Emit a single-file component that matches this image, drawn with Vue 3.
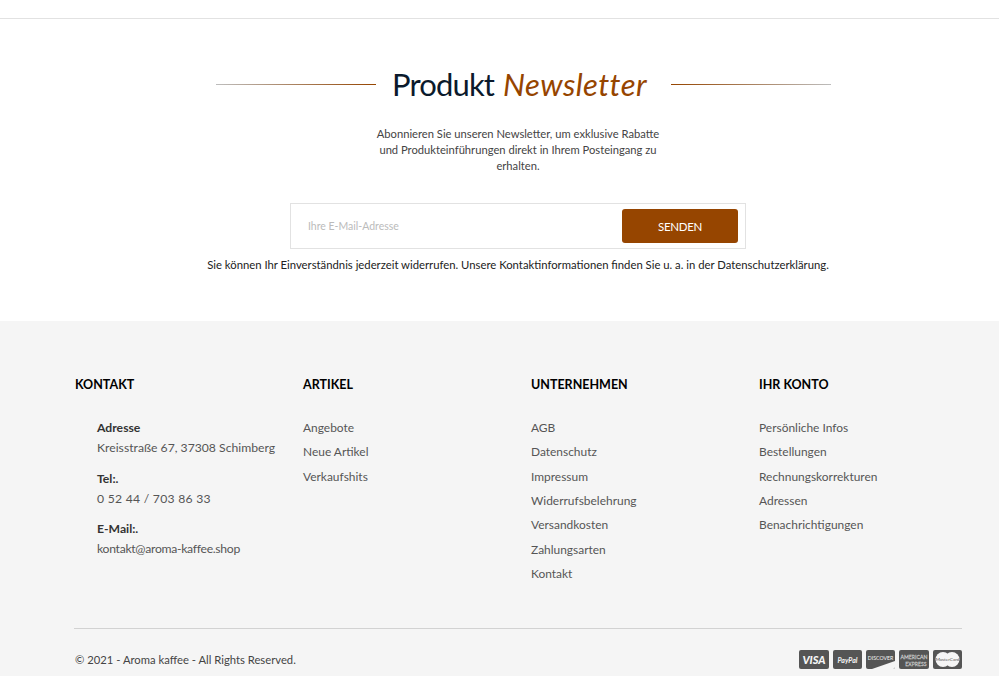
<script setup>
const columns = [
  { title: 'Artikel', links: ['Angebote', 'Neue Artikel', 'Verkaufshits'] },
  { title: 'Unternehmen', links: ['AGB', 'Datenschutz', 'Impressum', 'Widerrufsbelehrung', 'Versandkosten', 'Zahlungsarten', 'Kontakt'] },
  { title: 'Ihr Konto', links: ['Persönliche Infos', 'Bestellungen', 'Rechnungskorrekturen', 'Adressen', 'Benachrichtigungen'] },
]
const contact = [
  { label: 'Adresse', value: 'Kreisstraße 67, 37308 Schimberg', kind: 'addr' },
  { label: 'Tel:.', value: '0 52 44 / 703 86 33', kind: 'tel' },
  { label: 'E-Mail:.', value: 'kontakt@aroma-kaffee.shop', kind: 'mail' },
]
</script>

<template>
  <div class="page">
    <header class="topbar"></header>
    <section class="newsletter">
      <div class="title-row">
        <span class="rule rule-left"></span>
        <h2 class="title"><span class="t1">Produkt</span> <em>Newsletter</em></h2>
        <span class="rule rule-right"></span>
      </div>
      <p class="intro">Abonnieren Sie unseren Newsletter, um exklusive Rabatte<br>und Produkteinführungen direkt in Ihrem Posteingang zu<br>erhalten.</p>
      <form class="signup" @submit.prevent>
        <input class="email" type="text" placeholder="Ihre E-Mail-Adresse">
        <button class="send" type="submit">SENDEN</button>
      </form>
      <p class="consent">Sie können Ihr Einverständnis jederzeit widerrufen. Unsere Kontaktinformationen finden Sie u. a. in der Datenschutzerklärung.</p>
    </section>
    <footer class="footer">
      <div class="columns">
        <div class="col">
          <h3 class="col-title">Kontakt</h3>
          <div class="contact">
            <div v-for="item in contact" :key="item.label" class="contact-item" :class="item.kind">
              <strong>{{ item.label }}</strong>
              <span>{{ item.value }}</span>
            </div>
          </div>
        </div>
        <div v-for="col in columns" :key="col.title" class="col">
          <h3 class="col-title">{{ col.title }}</h3>
          <ul class="links">
            <li v-for="link in col.links" :key="link">{{ link }}</li>
          </ul>
        </div>
      </div>
      <div class="bottom">
        <span class="copy">© 2021 - Aroma kaffee - All Rights Reserved.</span>
        <div class="cards">
          <svg class="card" width="30" height="19" viewBox="0 0 30 19"><rect width="30" height="19" rx="2" fill="#555"/><text x="15" y="14" text-anchor="middle" class="c-visa">VISA</text></svg>
          <svg class="card" width="29" height="19" viewBox="0 0 29 19"><rect width="29" height="19" rx="2" fill="#555"/><text x="14.5" y="12.5" text-anchor="middle" class="c-pp">PayPal</text></svg>
          <svg class="card" width="29" height="19" viewBox="0 0 29 19"><rect width="29" height="19" rx="2" fill="#555"/><path d="M6 19 L29 11 V17 a2 2 0 0 1 -2 2 Z" fill="#f5f5f5"/><text x="14.5" y="9.5" text-anchor="middle" class="c-disc">DISCOVER</text></svg>
          <svg class="card" width="30" height="19" viewBox="0 0 30 19"><rect width="30" height="19" rx="2" fill="#555"/><text x="15" y="8.5" text-anchor="middle" class="c-am">AMERICAN</text><text x="17" y="15.5" text-anchor="middle" class="c-am">EXPRESS</text></svg>
          <svg class="card" width="29" height="19" viewBox="0 0 29 19"><rect width="29" height="19" rx="2" fill="#555"/><circle cx="10" cy="9.5" r="7.5" fill="#f5f5f5"/><circle cx="19" cy="9.5" r="7.5" fill="#f5f5f5"/><text x="14.5" y="11.2" text-anchor="middle" class="c-mc">MasterCard</text></svg>
        </div>
      </div>
    </footer>
  </div>
</template>

<style>
html, body { margin: 0; overflow: hidden; background: #fff; }
</style>

<style scoped>
.page {
  height: 676px;
  overflow: hidden;
  font-family: "Lato", "Open Sans", sans-serif;
  color: #444;
}
.topbar { height: 18px; border-bottom: 1px solid #e2e2e2; }
.newsletter {
  height: 302px;
  box-sizing: border-box;
  padding-left: 37px;
  display: flex;
  flex-direction: column;
  align-items: center;
}
.title-row {
  margin-top: 43px;
  margin-left: 11px;
  display: flex;
  align-items: center;
  width: 615px;
  height: 44px;
}
.rule { flex: none; width: 160px; height: 1px; }
.rule-left { background: linear-gradient(to right, #bdbdbd, #964500); }
.rule-right { background: linear-gradient(to right, #964500, #bdbdbd); }
.title {
  flex: 1;
  margin: 0;
  padding: 0 24px 0 16px;
  font-weight: 400;
  font-size: 31px;
  line-height: 44px;
  color: #0b1a2c;
  white-space: nowrap;
  word-spacing: 1px;
}
.t1 { letter-spacing: -0.85px; }
.title em { color: #964500; font-style: italic; letter-spacing: 0.4px; }
.intro {
  margin: 20px 0 0;
  width: 320px;
  text-align: center;
  font-size: 11.2px;
  line-height: 16px;
  color: #444;
}
.signup {
  margin-top: 29px;
  width: 456px;
  height: 46px;
  box-sizing: border-box;
  border: 1px solid #e2e2e2;
  display: flex;
  align-items: center;
  padding: 0 7px 0 17px;
}
.email {
  flex: 1;
  min-width: 0;
  border: 0;
  outline: 0;
  padding: 0;
  background: transparent;
  font: inherit;
  font-size: 10.5px;
}
.email::placeholder { color: #bbb; opacity: 1; }
.send {
  width: 116px;
  height: 34px;
  border: 0;
  border-radius: 3px;
  background: #964500;
  color: #fff;
  font: inherit;
  font-size: 11.5px;
  letter-spacing: -0.3px;
}
.consent {
  margin: 8px 0 0;
  font-size: 11.3px;
  line-height: 16px;
  color: #222;
  white-space: nowrap;
}
.footer {
  height: 355px;
  background: #f5f5f5;
  padding: 54px 37px 0 75px;
  box-sizing: border-box;
}
.columns {
  display: grid;
  grid-template-columns: repeat(4, 228px);
  height: 253px;
}
.col-title {
  margin: 0 0 21px;
  font-size: 12.5px;
  line-height: 20px;
  font-weight: 700;
  text-transform: uppercase;
  color: #000;
}
.contact { padding-left: 22px; padding-top: 2px; }
.contact-item {
  display: flex;
  flex-direction: column;
  margin-bottom: 10.5px;
  font-size: 12.2px;
  line-height: 20px;
  white-space: nowrap;
}
.contact-item strong { color: #333; font-weight: 700; }
.contact-item span { color: #555; }
.contact-item.tel span { letter-spacing: 0.25px; }
.contact-item.mail span { letter-spacing: -0.3px; }
.links { list-style: none; margin: 0; padding: 0; }
.links li {
  font-size: 11.95px;
  line-height: 24.33px;
  color: #555;
}
.bottom {
  border-top: 1px solid #d2d2d2;
  margin-left: -1px;
  padding-left: 1px;
  height: 47px;
  display: flex;
  align-items: center;
  justify-content: space-between;
  padding-top: 15px;
  box-sizing: border-box;
}
.copy { font-size: 11.25px; color: #444; }
.cards { display: flex; gap: 4px; }
.card { display: block; }
.c-visa { font: italic 900 11px "Lato", sans-serif; fill: #f5f5f5; }
.c-pp { font: italic 700 7px "Lato", sans-serif; fill: #f5f5f5; }
.c-disc { font: 400 5.2px "Lato", sans-serif; fill: #f5f5f5; }
.c-am { font: 400 5.2px "Lato", sans-serif; fill: #555; stroke: #ddd; stroke-width: 0.3px; }
.c-mc { font: 400 4.6px "Lato", sans-serif; fill: #555; }
</style>
